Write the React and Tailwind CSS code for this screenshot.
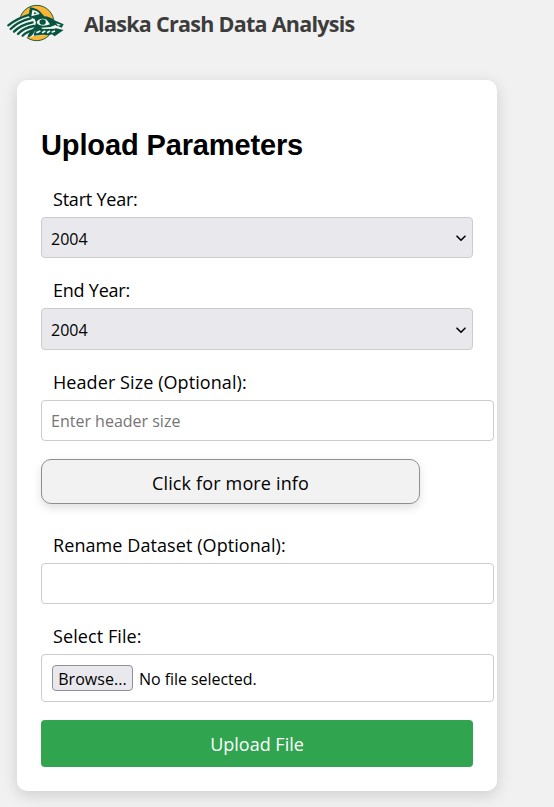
function Logo() {
  return (
    <svg viewBox="21 12 174 114" className="h-[38px] w-[58px] shrink-0" aria-label="Seawolf logo">
      <ellipse cx="110" cy="69" rx="52" ry="53" fill="#fbb530" stroke="#1d5c42" strokeWidth="3" />
      <path d="M22 77 Q50 52 87 43 L92 24 Q114 26 126 43 L132 50 Q150 52 162 62 L191 73 L185 83 L191 91 L165 108 L158 103 L104 108 L76 114 L58 106 L40 96 L30 88 Z" fill="#f4f5f2" />
      <g fill="none" stroke="#075440" strokeWidth="7" strokeLinecap="round">
        <path d="M25 76 Q52 54 92 43" />
        <path d="M32 87 Q55 64 92 55" />
        <path d="M42 95 Q62 74 98 67" />
        <path d="M54 102 Q70 84 102 78" />
        <path d="M68 107 Q80 94 108 88" />
      </g>
      <path d="M86 45 L90 22 Q114 24 127 42 L133 49 Q150 50 163 61 L191 73 L185 83 L173 78 L162 84 L130 86 Q112 87 104 94 Q96 111 82 113 Q84 99 96 90 L104 80 L108 68 L104 57 L88 52 Z" fill="#075440" />
      <path d="M97 30 Q112 32 119 42 L94 49 Z" fill="#f4f5f2" />
      <path d="M103 36 L102 43 L111 40 Z" fill="#075440" />
      <path d="M110 67 Q114 56 128 56 Q141 56 145 66 L150 73 Q142 77 129 77 Q113 77 110 67 Z" fill="#f4f5f2" />
      <ellipse cx="128" cy="66" rx="9.5" ry="8.5" fill="#075440" />
      <path d="M168 70 L184 75 L174 77 Z" fill="#f4f5f2" />
      <path d="M101 107 Q102 88 124 85 L165 84 L191 90 L178 99 L164 109 L156 103 L146 106 L130 104 Z" fill="#075440" />
      <path d="M123 83 L151 81 L166 75 L174 80 L164 86 L128 87 Z" fill="#f4f5f2" />
      <path d="M109 98 L121 93 M126 98 L136 93 M141 98 L150 93 M155 97 L165 93" fill="none" stroke="#f4f5f2" strokeWidth="5" />
    </svg>
  );
}

function Label({ children, narrow }) {
  return (
    <div className={`${narrow ? "tracking-[-0.22px]" : "tracking-[0.08px]"} flex h-[30px] items-center pl-3 text-[18px] whitespace-nowrap`}>
      {children}
    </div>
  );
}

function YearSelect({ label, tall }) {
  return (
    <div>
      <Label narrow>{label}</Label>
      <div className={`${tall ? "h-[42px]" : "h-[41px]"} mt-[3px] flex items-center justify-between rounded-[4px] border border-[#ccc] bg-[#e9e9ed] pr-[6px] pl-[9px] text-base`}>
        <span className="pt-[2px]">2004</span>
        <svg viewBox="0 0 10 7" className="mt-[2px] h-[7px] w-[10px]" fill="none" stroke="black" strokeWidth="1.6" strokeLinecap="round" strokeLinejoin="round">
          <path d="M1 1.2 L5 5.2 L9 1.2" />
        </svg>
      </div>
    </div>
  );
}

export default function App() {
  return (
    <div className="h-[807px] w-[554px] overflow-hidden bg-[#f1f1f1] font-['Open_Sans','Noto_Sans',sans-serif] text-black">
      <header className="flex h-[80px] items-start pt-1 pl-[7px]">
        <Logo />
        <h1 className="ml-[19px] pt-[4px] text-[21.5px] leading-[32px] font-bold tracking-[-0.72px] whitespace-nowrap text-[#3c3c3c]">
          Alaska Crash Data Analysis
        </h1>
      </header>
      <main className="ml-[17px] h-[711px] w-[480px] rounded-[10px] bg-white px-6 pt-[48px] shadow-[0_4px_16px_rgba(0,0,0,0.15)]">
        <h2 className="h-[53px] font-['Liberation_Sans',Arial,sans-serif] text-[29px] leading-[34px] font-bold tracking-[-0.13px] whitespace-nowrap">
          Upload Parameters
        </h2>
        <div className="mt-[3px] flex flex-col gap-[17px]">
          <YearSelect label="Start Year:" />
          <YearSelect label="End Year:" tall />
        </div>
        <div className="mt-[17px]">
          <Label>Header Size (Optional):</Label>
          <input className="mt-[3px] block h-[41px] w-[453px] rounded-[4px] border border-[#ccc] px-[9px] text-base placeholder:text-[#757575]" placeholder="Enter header size" />
        </div>
        <button className="mt-[18px] block h-[45px] w-[379px] rounded-[10px] border border-[#8f8f8f] bg-[#f2f2f2] pt-[3px] text-[18px] tracking-[0.15px] shadow-[0_4px_10px_rgba(0,0,0,0.12)]">
          Click for more info
        </button>
        <div className="mt-[26px]">
          <Label>Rename Dataset (Optional):</Label>
          <input className="mt-[3px] block h-[41px] w-[453px] rounded-[4px] border border-[#ccc] px-[10px]" />
        </div>
        <div className="mt-[17px]">
          <Label>Select File:</Label>
          <div className="mt-[3px] flex h-[48px] w-[453px] items-center gap-[6px] rounded-[4px] border border-[#ccc] pl-[10px] text-base">
            <button className="h-[26px] w-[81px] rounded-[4px] border border-[#8f8f9d] bg-[#e9e9ed] pt-px leading-6 tracking-[0.05px]">Browse...</button>
            <span className="pt-[2px] tracking-[-0.05px]">No file selected.</span>
          </div>
        </div>
        <button className="mt-[18px] block h-[47px] w-full rounded-[4px] bg-[#30a44f] pt-[2px] text-[18px] text-white">
          Upload File
        </button>
      </main>
    </div>
  );
}
